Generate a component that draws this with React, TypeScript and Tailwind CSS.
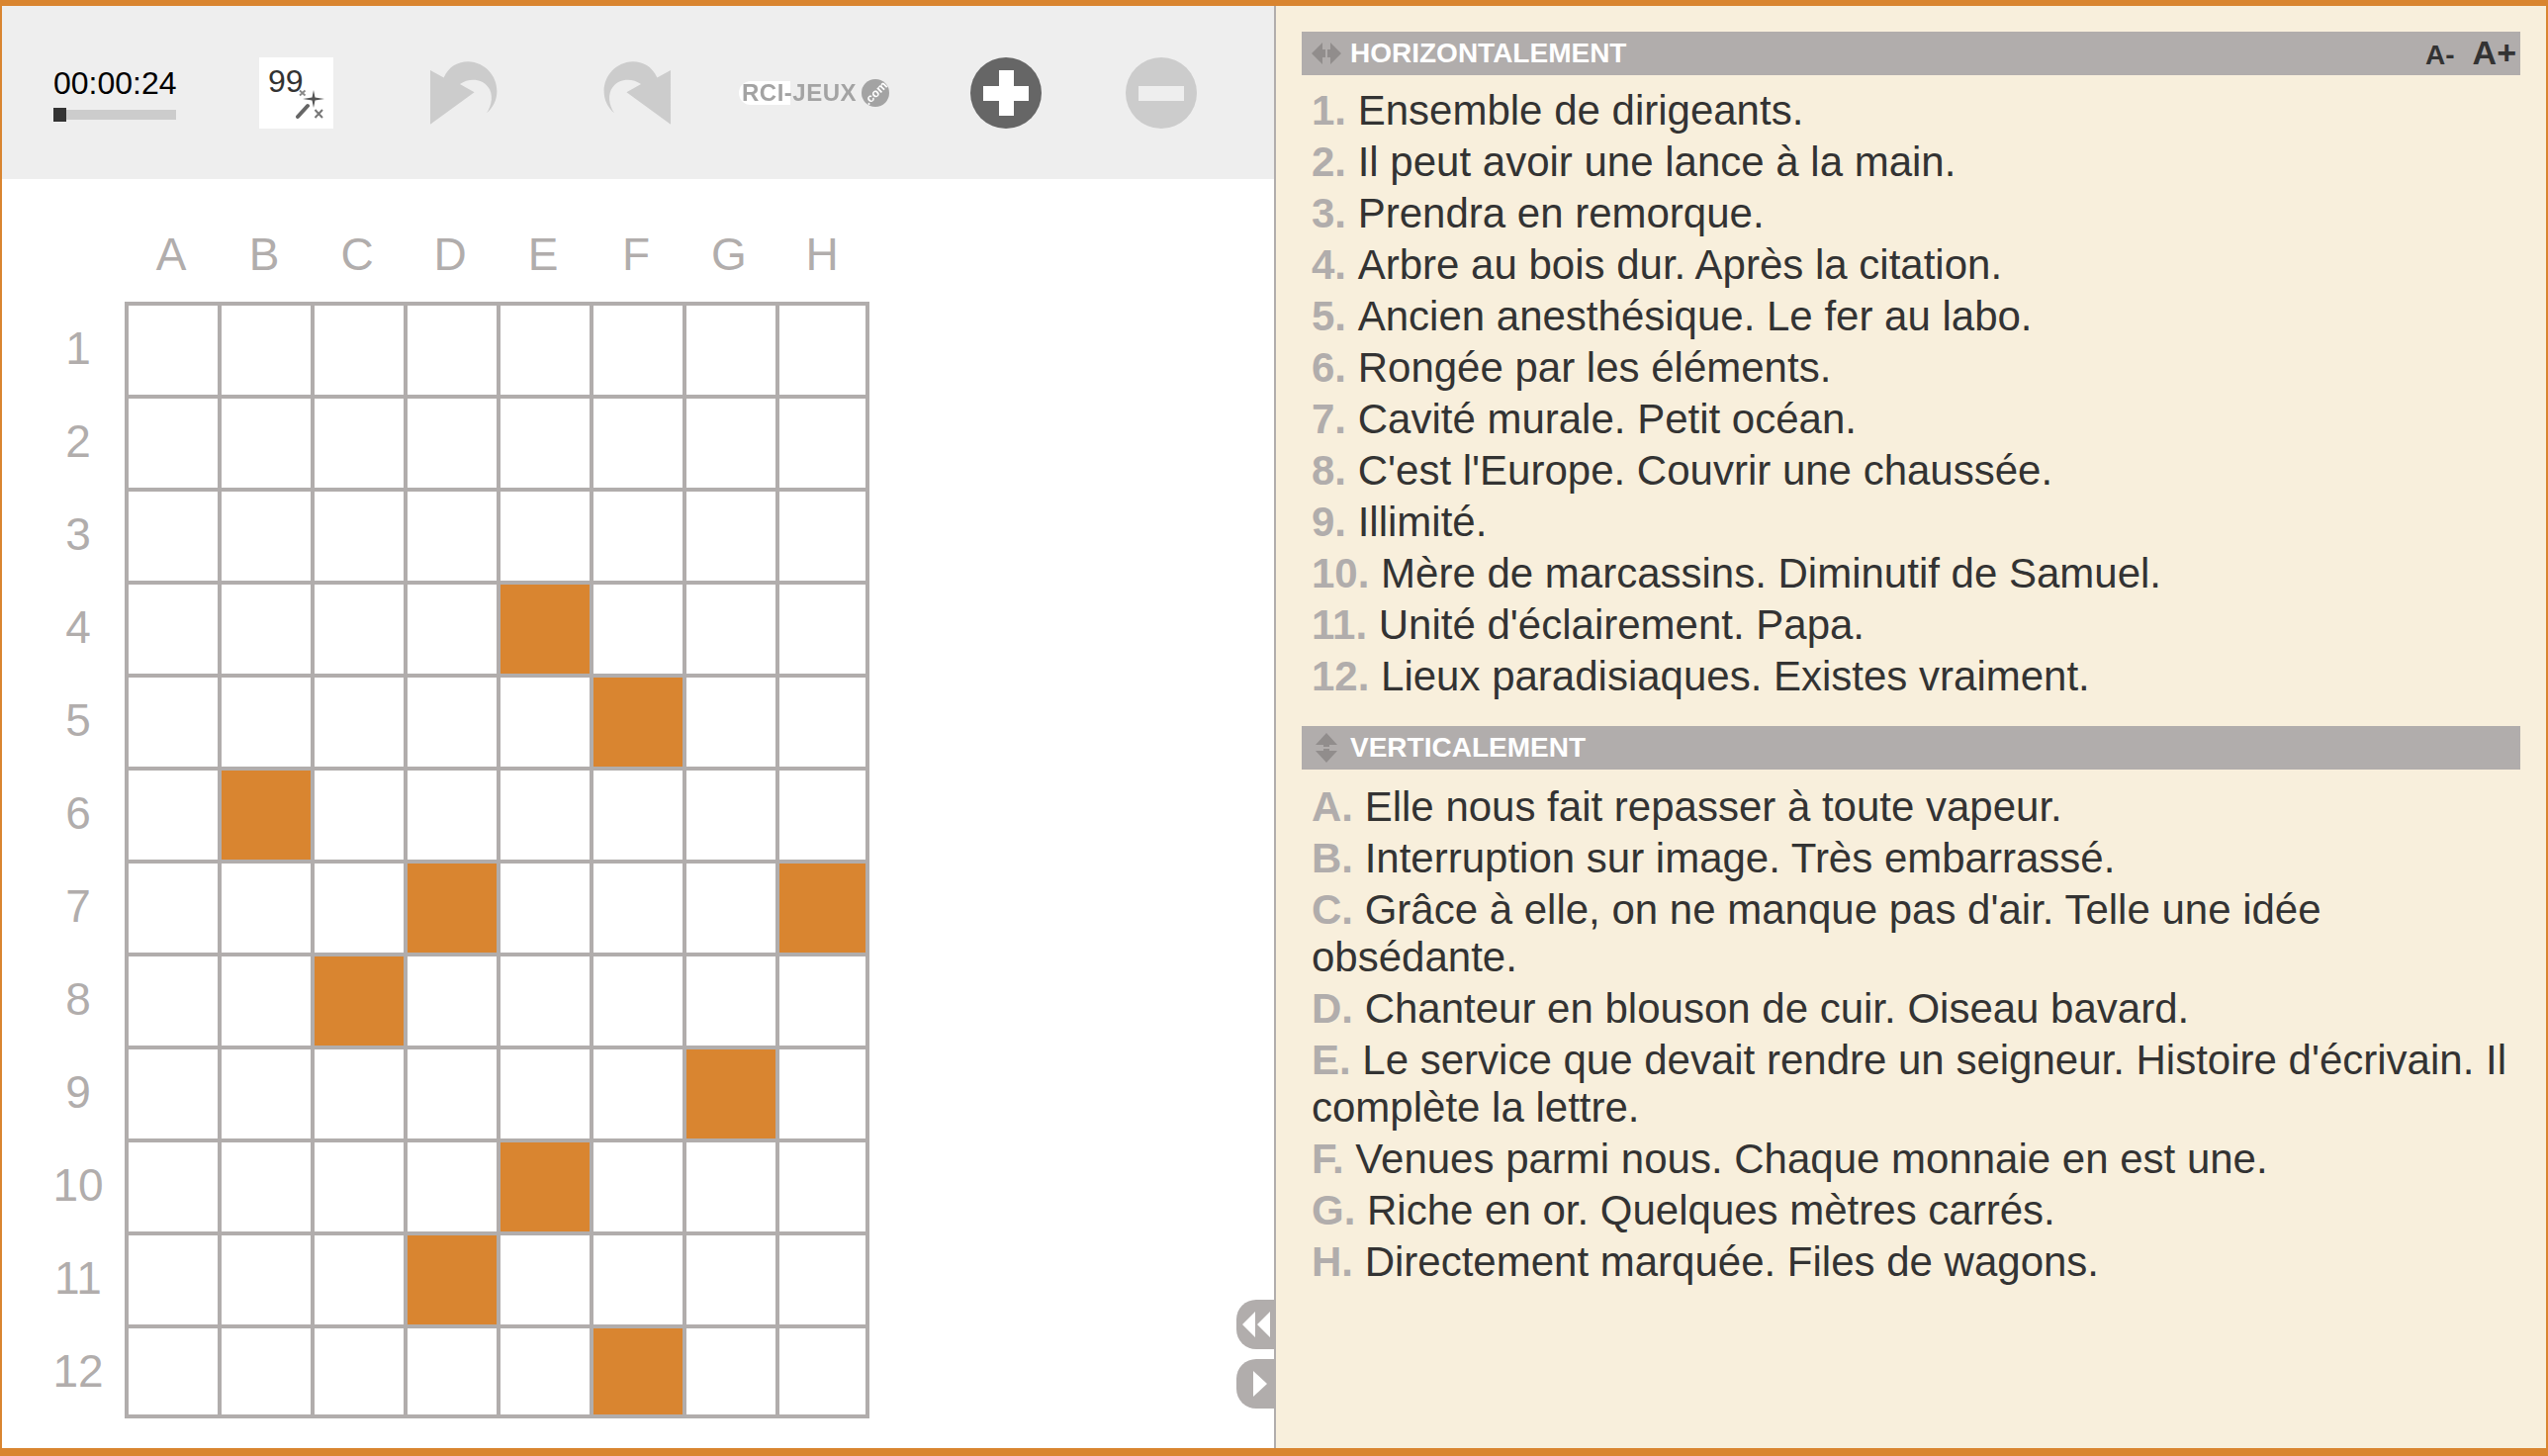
const rows = [1, 2, 3, 4, 5, 6, 7, 8, 9, 10, 11, 12];
const cols = ["A", "B", "C", "D", "E", "F", "G", "H"];

// cellules noires de la grille, ligne-colonne
const filled = ["4E", "5F", "6B", "7D", "7H", "8C", "9G", "10E", "11D", "12F"];

const horizontal = [
  ["1.", "Ensemble de dirigeants."],
  ["2.", "Il peut avoir une lance à la main."],
  ["3.", "Prendra en remorque."],
  ["4.", "Arbre au bois dur. Après la citation."],
  ["5.", "Ancien anesthésique. Le fer au labo."],
  ["6.", "Rongée par les éléments."],
  ["7.", "Cavité murale. Petit océan."],
  ["8.", "C'est l'Europe. Couvrir une chaussée."],
  ["9.", "Illimité."],
  ["10.", "Mère de marcassins. Diminutif de Samuel."],
  ["11.", "Unité d'éclairement. Papa."],
  ["12.", "Lieux paradisiaques. Existes vraiment."],
];

const vertical = [
  ["A.", "Elle nous fait repasser à toute vapeur."],
  ["B.", "Interruption sur image. Très embarrassé."],
  ["C.", "Grâce à elle, on ne manque pas d'air. Telle une idée obsédante."],
  ["D.", "Chanteur en blouson de cuir. Oiseau bavard."],
  ["E.", "Le service que devait rendre un seigneur. Histoire d'écrivain. Il complète la lettre."],
  ["F.", "Venues parmi nous. Chaque monnaie en est une."],
  ["G.", "Riche en or. Quelques mètres carrés."],
  ["H.", "Directement marquée. Files de wagons."],
];

function Arrow({ mirrored }: { mirrored?: boolean }) {
  return (
    <svg
      viewBox="40 25 215 205"
      className={`h-[68px] w-[70px] blur-[0.4px] ${mirrored ? "-scale-x-100" : ""}`}
    >
      <path
        d="M43 57 L85 80 C100 45 130 30 160 30 C215 32 250 75 250 122 C250 150 238 172 218 190 C235 165 240 130 222 108 C205 85 165 78 135 100 L180 125 L43 225 Z"
        fill="#cccccc"
      />
    </svg>
  );
}

function Round({ plus, dark }: { plus?: boolean; dark?: boolean }) {
  return (
    <svg viewBox="0 0 72 72" className="h-[72px] w-[72px] blur-[0.3px]">
      <circle cx="36" cy="36" r="36" fill={dark ? "#666666" : "#cccccc"} />
      <rect x="13" y="29" width="46" height="15" fill={dark ? "#ffffff" : "#eeeeee"} />
      {plus && <rect x="29" y="13" width="15" height="46" fill="#ffffff" />}
    </svg>
  );
}

function SectionBar({ label, vert, children }: { label: string; vert?: boolean; children?: React.ReactNode }) {
  return (
    <div className="flex h-[44px] items-center bg-[#b1adac] pl-[10px] pr-[4px]">
      <svg viewBox="0 0 30 30" className="mr-[9px] h-[30px] w-[30px]">
        <path
          d={
            vert
              ? "M15 0 L26 12 L18 12 L18 14 L12 14 L12 12 L4 12 Z M15 30 L26 18 L18 18 L18 16 L12 16 L12 18 L4 18 Z"
              : "M0 15 L11 4 L11 11 L14 11 L14 19 L11 19 L11 26 Z M30 15 L19 4 L19 11 L16 11 L16 19 L19 19 L19 26 Z"
          }
          fill="#918d8c"
        />
      </svg>
      <span className="text-[28px] font-bold text-white">{label}</span>
      {children}
    </div>
  );
}

function Clues({ items, className }: { items: string[][]; className: string }) {
  return (
    <div className={`px-[10px] ${className}`}>
      {items.map(([n, text]) => (
        <p key={n} className="mb-[4px] text-[42px] leading-[48px] text-[#333333]">
          <b className="text-[#b1adac]">{n} </b>
          {text}
        </p>
      ))}
    </div>
  );
}

export default function App() {
  return (
    <div
      className="flex h-screen overflow-hidden border-x-2 border-t-[6px] border-b-8 border-[#d98530] bg-white"
      style={{ fontFamily: '"Liberation Sans", Arial, sans-serif' }}
    >
      <div className="relative w-[1286px] shrink-0">
        <div className="flex h-[175px] items-center bg-[#eeeeee] pl-[52px]">
          <div className="w-[124px]">
            <div className="pt-[1px] text-[32px] leading-[37px] text-black">00:00:24</div>
            <div className="mt-[6px] flex h-[14px] items-center">
              <div className="h-[14px] w-[13px] bg-[#333333]" />
              <div className="h-[10px] flex-1 bg-[#cccccc]" />
            </div>
          </div>

          <div className="relative ml-[84px] h-[72px] w-[75px] bg-white pl-[9px] pt-[9px] text-[32px] leading-[30px] text-[#333333]">
            99
            <svg viewBox="0 0 75 72" className="absolute left-0 top-0 h-[72px] w-[75px] blur-[0.3px]">
              <path d="M39 60 L49 49" stroke="#666666" strokeWidth="4" strokeLinecap="round" />
              <path d="M55 33 L56.500 40.500 L66 42 L56.500 43.500 L55 51 L53.500 43.500 L44 42 L53.500 40.500 Z" fill="#555555" />
              <path d="M41 33.500 L46.500 38.500 M46.500 33.500 L41 38.500" stroke="#888888" strokeWidth="1.800" />
              <path d="M56.500 53 L64 61 M64 53 L56.500 61" stroke="#777777" strokeWidth="2" />
            </svg>
          </div>

          <div className="ml-[97px]">
            <Arrow />
          </div>
          <div className="ml-[105px]">
            <Arrow mirrored />
          </div>

          <div className="relative ml-[68px] flex h-[28px] w-[152px] items-center blur-[0.6px]">
            <div className="absolute left-0 top-[2px] h-[24px] w-[52px] rounded-l-full bg-white" />
            <span className="relative ml-[3px] text-[24px] font-bold leading-none tracking-[0.5px] text-[#a3a3a3]">
              RCI-JEUX
            </span>
            <div className="absolute right-0 top-0 flex h-[28px] w-[28px] items-center justify-center rounded-full bg-[#a3a3a3]">
              <span className="-rotate-45 text-[12px] font-bold leading-none text-white">.com</span>
            </div>
          </div>

          <div className="ml-[82px]">
            <Round plus dark />
          </div>
          <div className="ml-[85px]">
            <Round />
          </div>
        </div>

        <div className="pl-[46px] pt-[52px] text-[46px] text-[#b1adac]">
          <div className="mb-[24px] flex pl-[78px]">
            {cols.map((c) => (
              <div key={c} className="w-[94px] text-center leading-[48px]">
                {c}
              </div>
            ))}
          </div>
          <div className="flex">
            <div className="mr-[16px] w-[62px]">
              {rows.map((r) => (
                <div key={r} className="flex h-[94px] items-center justify-center">
                  {r}
                </div>
              ))}
            </div>
            <div className="grid grid-cols-[repeat(7,94px)_91px] grid-rows-[repeat(11,94px)_91px] border-r-4 border-b-4 border-[#b1adac]">
              {rows.map((r) =>
                cols.map((c) => (
                  <div
                    key={r + c}
                    className={`border-l-4 border-t-4 border-[#b1adac] ${
                      filled.includes(r + c) ? "bg-[#d98530]" : "bg-white"
                    }`}
                  />
                )),
              )}
            </div>
          </div>
        </div>

        <div className="absolute bottom-[40px] right-0 flex flex-col gap-[10px]">
          <div className="flex h-[50px] w-[38px] items-center justify-end rounded-l-[20px] bg-[#b1adac] pr-[4px]">
            <svg viewBox="0 0 28 26" className="h-[26px] w-[28px]">
              <path d="M0 13 L13 0 L13 26 Z M15 13 L28 0 L28 26 Z" fill="#ffffff" />
            </svg>
          </div>
          <div className="flex h-[50px] w-[38px] items-center justify-end rounded-l-[20px] bg-[#b1adac] pr-[7px]">
            <svg viewBox="0 0 14 26" className="h-[26px] w-[14px]">
              <path d="M0 0 L14 13 L0 26 Z" fill="#ffffff" />
            </svg>
          </div>
        </div>
      </div>

      <div className="flex-1 border-l-2 border-[#b1adac] bg-[#f8efdc] px-[26px] pt-[26px]">
        <SectionBar label="HORIZONTALEMENT">
          <div className="-mt-[3px] ml-auto flex items-baseline font-bold text-[#333333]">
            <span className="text-[28px] leading-none">A-</span>
            <span className="ml-[18px] text-[34px] leading-none">A+</span>
          </div>
        </SectionBar>
        <Clues items={horizontal} className="pt-[12px]" />
        <div className="h-[22px]" />
        <SectionBar label="VERTICALEMENT" vert />
        <Clues items={vertical} className="pt-[14px]" />
      </div>
    </div>
  );
}
